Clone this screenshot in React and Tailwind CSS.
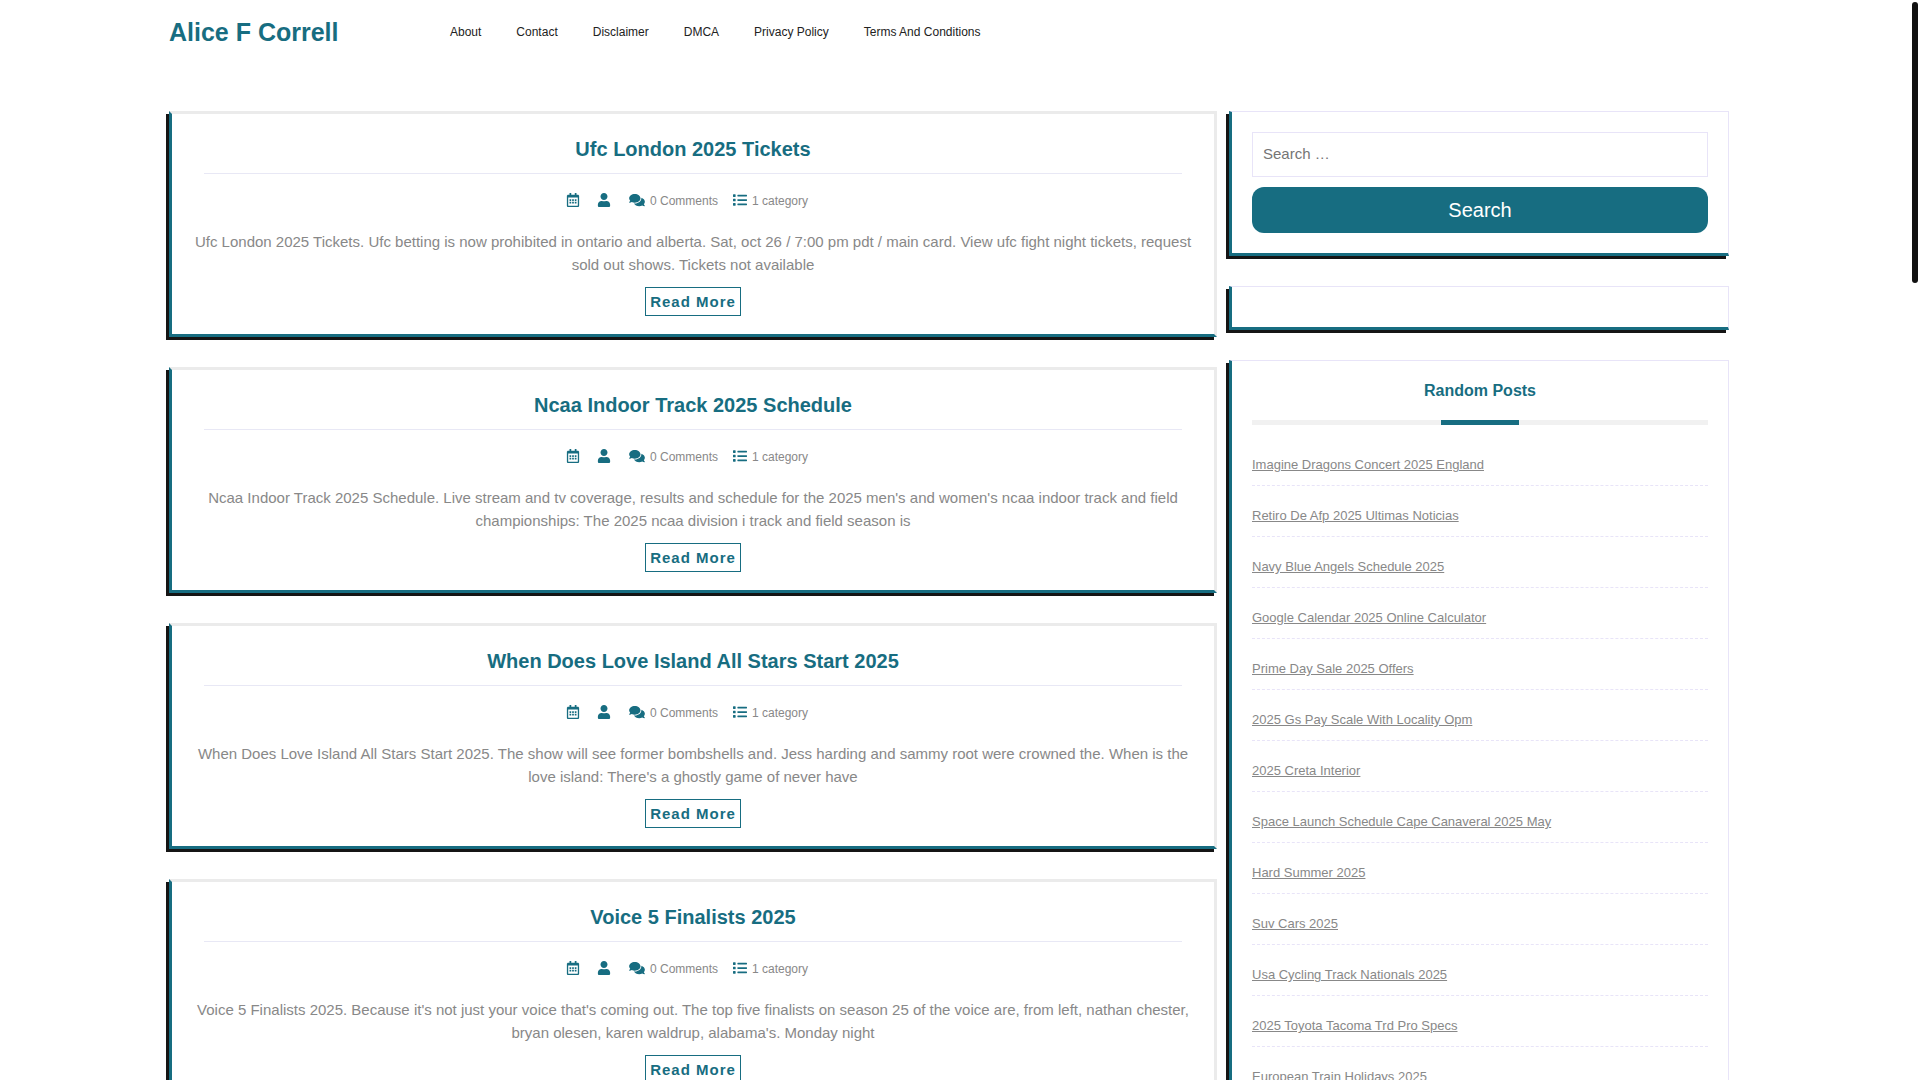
import { FaRegCalendarAlt, FaUser, FaComments, FaList } from "react-icons/fa";

const navLinks = ["About", "Contact", "Disclaimer", "DMCA", "Privacy Policy", "Terms And Conditions"];

const posts = [
  {
    title: "Ufc London 2025 Tickets",
    text: "Ufc London 2025 Tickets. Ufc betting is now prohibited in ontario and alberta. Sat, oct 26 / 7:00 pm pdt / main card. View ufc fight night tickets, request sold out shows. Tickets not available",
  },
  {
    title: "Ncaa Indoor Track 2025 Schedule",
    text: "Ncaa Indoor Track 2025 Schedule. Live stream and tv coverage, results and schedule for the 2025 men's and women's ncaa indoor track and field championships: The 2025 ncaa division i track and field season is",
  },
  {
    title: "When Does Love Island All Stars Start 2025",
    text: "When Does Love Island All Stars Start 2025. The show will see former bombshells and. Jess harding and sammy root were crowned the. When is the love island: There's a ghostly game of never have",
  },
  {
    title: "Voice 5 Finalists 2025",
    text: "Voice 5 Finalists 2025. Because it's not just your voice that's coming out. The top five finalists on season 25 of the voice are, from left, nathan chester, bryan olesen, karen waldrup, alabama's. Monday night",
  },
];

const randomPosts = [
  "Imagine Dragons Concert 2025 England",
  "Retiro De Afp 2025 Ultimas Noticias",
  "Navy Blue Angels Schedule 2025",
  "Google Calendar 2025 Online Calculator",
  "Prime Day Sale 2025 Offers",
  "2025 Gs Pay Scale With Locality Opm",
  "2025 Creta Interior",
  "Space Launch Schedule Cape Canaveral 2025 May",
  "Hard Summer 2025",
  "Suv Cars 2025",
  "Usa Cycling Track Nationals 2025",
  "2025 Toyota Tacoma Trd Pro Specs",
  "European Train Holidays 2025",
];

function PostCard({ title, text }) {
  return (
    <article className="border-3 border-[#ebebeb] border-l-[#176d81] border-b-[#176d81] shadow-[-3px_3px_0_#151515] px-5 pt-[23px] pb-[18px] text-center">
      <h2 className="mx-3 pb-3 border-b border-[#e8e8f5] text-xl leading-6 font-bold text-[#176d81]">
        <a href="#">{title}</a>
      </h2>
      <div className="mt-[19px] pr-3 flex justify-center items-start text-xs leading-4 text-[#888888]">
        <FaRegCalendarAlt className="w-[14px] h-[14px] text-[#176d81]" />
        <FaUser className="w-[14px] h-[14px] ml-[17px] text-[#176d81]" />
        <FaComments className="w-4 h-[14px] ml-[18px] mr-[5px] text-[#176d81]" />
        <span>0 Comments</span>
        <FaList className="w-[14px] h-[14px] ml-[15px] mr-[5px] text-[#176d81]" />
        <span>1 category</span>
      </div>
      <p className="mt-[21px] text-[15px] leading-[23px] text-[#888888]">{text}</p>
      <a
        href="#"
        className="mt-[11px] inline-block align-top border border-[#176d81] px-1 text-[15px] leading-[27px] font-bold tracking-[1px] text-[#176d81]"
      >
        Read More
      </a>
    </article>
  );
}

function Widget({ children }) {
  return (
    <section className="border border-[#e8e4f8] border-l-3 border-b-3 border-l-[#176d81] border-b-[#176d81] shadow-[-3px_3px_0_#151515] p-5">
      {children}
    </section>
  );
}

function App() {
  return (
    <div className="h-screen overflow-y-auto [scrollbar-width:none] bg-white font-['Liberation_Sans',Arial,sans-serif]">
      <header className="flex items-center h-16 pl-[169px] pr-[191px]">
        <h1 className="w-[281px] text-[25px] leading-8 font-bold text-[#176d81]">
          <a href="#">Alice F Correll</a>
        </h1>
        <nav className="flex gap-[35px] text-xs leading-6 text-[#222222]">
          {navLinks.map((link) => (
            <a key={link} href="#">{link}</a>
          ))}
        </nav>
      </header>

      <div className="grid grid-cols-[1048fr_500fr] gap-3 items-start mt-[47px] pl-[169px] pr-[191px]">
        <main className="flex flex-col gap-[30px] pb-[30px]">
          {posts.map((post) => (
            <PostCard key={post.title} title={post.title} text={post.text} />
          ))}
        </main>

        <aside className="flex flex-col gap-[30px] pb-[30px]">
          <Widget>
            <form className="flex flex-col gap-[10px]" onSubmit={(e) => e.preventDefault()}>
              <input
                type="search"
                aria-label="Search for"
                placeholder="Search …"
                className="h-[45px] border border-[#e8e4f8] px-[10px] pb-0.5 text-[15px] placeholder:text-[#757575]"
              />
              <button type="submit" className="h-[46px] rounded-xl bg-[#176d81] text-xl text-white">
                Search
              </button>
            </form>
          </Widget>
          <Widget />
          <Widget>
            <h3 className="text-center text-base leading-5 font-bold text-[#176d81]">Random Posts</h3>
            <div className="mt-[19px] mb-[10px] h-[5px] bg-[#f1f1f1]">
              <div className="mx-auto h-full w-[78px] bg-[#176d81]"></div>
            </div>
            <ul className="text-[13px] leading-5 text-[#888888]">
              {randomPosts.map((post) => (
                <li key={post} className="pt-5 pb-[10px] border-b border-dashed border-[#e8e4f8]">
                  <a href="#" className="underline">{post}</a>
                </li>
              ))}
            </ul>
          </Widget>
        </aside>
      </div>

      {/* scroll thumb */}
      <div className="fixed top-0.5 right-0.5 w-1.5 h-[281px] rounded-full bg-[#111111]"></div>
    </div>
  );
}

export default App;
